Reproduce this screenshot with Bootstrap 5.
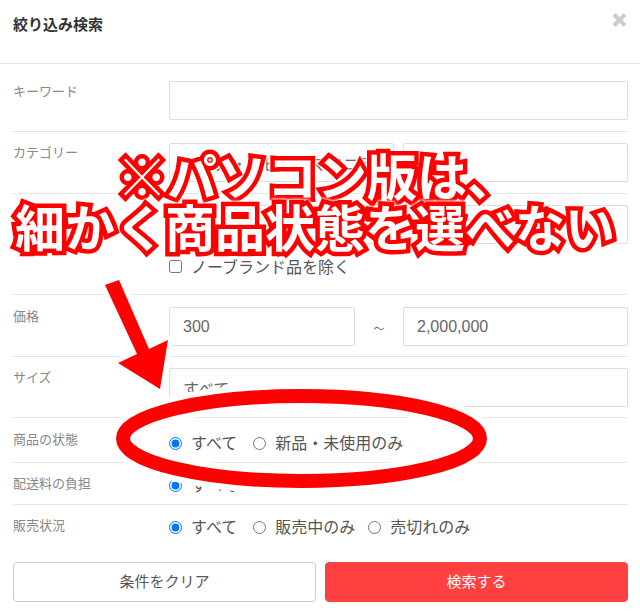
<!DOCTYPE html>
<html lang="ja">
<head>
    <meta charset="UTF-8">
    <title>絞り込み検索</title>
    <link href="https://cdn.jsdelivr.net/npm/bootstrap@5.3.0/dist/css/bootstrap.min.css" rel="stylesheet">
    <style>
        html, body { height: 614px; overflow: hidden; }
        body { font-family: "Liberation Sans", "Noto Sans CJK JP", sans-serif; color: #333; background: #fff; }
        .shot { position: relative; width: 640px; height: 614px; overflow: hidden; }
        .modal-top { height: 64px; border-bottom: 1px solid #e6e6e6; padding: 15px 13px 0; }
        .modal-top h1 { font-size: 15px; font-weight: 700; line-height: 20px; margin: 0; color: #333; }
        .close-x { position: absolute; left: 612px; top: 13px; width: 15px; height: 14px; }
        .filter-body { padding: 0 12px 0 13px; }
        .filter-row { display: flex; border-bottom: 1px solid #e6e6e6; padding: 11px 0; }
        .filter-row.row-first { padding-top: 17px; }
        .filter-row.row-first .filter-label { padding-top: 2px; }
        .filter-row.row-price { padding: 12px 0 10px; }
        .filter-row.row-size { padding: 11px 0 10px; }
        .filter-row.row-radio { padding: 0; }
        .filter-row.last { border-bottom: 0; }
        .filter-label { width: 156px; flex: none; font-size: 13px; line-height: 18px; color: #888; padding-top: 1px; }
        .filter-main { flex: 1; min-width: 0; }
        .filter-input.form-control { height: 39px; border: 1px solid #ddd; border-radius: 2px; padding: 0 13px; font-size: 16px; color: #666; background: #fff; box-shadow: none; }
        .input-pair { display: flex; gap: 9px; }
        .input-pair .filter-input { flex: 1; min-width: 0; }
        .price-sep { width: 48px; height: 39px; padding-top: 3px; flex: none; text-align: center; font-size: 11px; line-height: 39px; color: #666; }
        .price-low.form-control { flex: none; width: 186px; }
        .opt { display: inline-flex; align-items: center; margin-right: 13px; font-size: 16px; line-height: 20px; color: #555; }
        .opt:first-child { margin-right: 16px; }
        .opt input { margin: 0 9px 0 0; width: 13px; height: 13px; }
        .opt span { position: relative; top: 1px; }
        .brand-check { margin-top: 12px; height: 27px; }
        .cond-row { height: 45px; }
        .ship-row { height: 42px; }
        .sale-row { height: 46px; }
        .row-radio .filter-label { padding-top: 12px; }
        .cond-row .filter-label { padding-top: 13px; }
        .cond-row .filter-main { padding-top: 15px; }
        .ship-row .filter-main { padding-top: 12px; }
        .sale-row .filter-main { padding-top: 12px; }
        .action-row { display: flex; gap: 9px; padding: 0 12px 0 13px; margin-top: 11px; }
        .btn-filter { flex: 1; height: 40px; border-radius: 4px; font-size: 15px; padding: 0; }
        .btn-filter.btn-clear { background: #fff; border: 1px solid #ccc; color: #555; }
        .btn-filter.btn-go { background: #ff4040; border: 1px solid #ff4040; color: #fff; }
        .note-line { position: absolute; white-space: nowrap; font-weight: 700; font-family: "Noto Sans CJK JP", sans-serif; color: #fff; -webkit-text-stroke: 9px #f00; paint-order: stroke fill; line-height: 1; filter: drop-shadow(0 0 1px #fff) drop-shadow(0 0 1px #fff); }
        .note-a { left: 117px; top: 149px; font-size: 50px; }
        .note-b { left: 15px; top: 200px; font-size: 50px; }
        .mark-svg { position: absolute; left: 0; top: 0; }
    </style>
</head>
<body>
<div class="shot">
    <div class="modal-top">
        <h1>絞り込み検索</h1>
    </div>
    <svg class="close-x" viewBox="0 0 15 14"><path d="M2 1.5l11 11M13 1.5l-11 11" stroke="#ccc" stroke-width="4"/></svg>

    <div class="filter-body">
        <div class="filter-row row-first">
            <div class="filter-label">キーワード</div>
            <div class="filter-main"><input class="form-control filter-input" type="text"></div>
        </div>
        <div class="filter-row">
            <div class="filter-label">カテゴリー</div>
            <div class="filter-main input-pair">
                <input class="form-control filter-input" type="text" value="キッズ・ベビー・マタニティ">
                <input class="form-control filter-input" type="text" value="すべて">
            </div>
        </div>
        <div class="filter-row">
            <div class="filter-label">ブランド</div>
            <div class="filter-main">
                <input class="form-control filter-input" type="text">
                <div class="brand-check">
                    <label class="opt"><input type="checkbox"><span>ノーブランド品を除く</span></label>
                </div>
            </div>
        </div>
        <div class="filter-row row-price">
            <div class="filter-label">価格</div>
            <div class="filter-main input-pair gap-0">
                <input class="form-control filter-input price-low" type="text" value="300">
                <div class="price-sep">～</div>
                <input class="form-control filter-input" type="text" value="2,000,000">
            </div>
        </div>
        <div class="filter-row row-size">
            <div class="filter-label">サイズ</div>
            <div class="filter-main"><input class="form-control filter-input" type="text" value="すべて"></div>
        </div>
        <div class="filter-row row-radio cond-row">
            <div class="filter-label">商品の状態</div>
            <div class="filter-main d-flex align-items-start">
                <label class="opt"><input type="radio" name="cond" checked><span>すべて</span></label>
                <label class="opt"><input type="radio" name="cond"><span>新品・未使用のみ</span></label>
            </div>
        </div>
        <div class="filter-row row-radio ship-row">
            <div class="filter-label">配送料の負担</div>
            <div class="filter-main d-flex align-items-start">
                <label class="opt"><input type="radio" name="ship" checked><span>すべて</span></label>
            </div>
        </div>
        <div class="filter-row row-radio sale-row last">
            <div class="filter-label">販売状況</div>
            <div class="filter-main d-flex align-items-start">
                <label class="opt"><input type="radio" name="sale" checked><span>すべて</span></label>
                <label class="opt"><input type="radio" name="sale"><span>販売中のみ</span></label>
                <label class="opt"><input type="radio" name="sale"><span>売切れのみ</span></label>
            </div>
        </div>
    </div>
    <div class="action-row">
        <button type="button" class="btn btn-filter btn-clear">条件をクリア</button>
        <button type="button" class="btn btn-filter btn-go">検索する</button>
    </div>

    <!-- annotation drawn on top of the screenshot -->
    <svg class="mark-svg" width="640" height="614" viewBox="0 0 640 614">
        <polygon points="105,285 119,280 149,349 168,340 160,389 118,363 137,354" fill="#fff" stroke="#fff" stroke-width="10" stroke-linejoin="round"/>
        <ellipse cx="301.5" cy="438.5" rx="178.5" ry="42.5" fill="none" stroke="#fff" stroke-width="26"/>
        <polygon points="105,285 119,280 149,349 168,340 160,389 118,363 137,354" fill="#f00"/>
        <ellipse cx="301.5" cy="438.5" rx="178.5" ry="42.5" fill="none" stroke="#f00" stroke-width="14"/>
    </svg>
    <div class="note-line note-a">※パソコン版は、</div>
    <div class="note-line note-b">細かく商品状態を選べない</div>
</div>
</body>
</html>
